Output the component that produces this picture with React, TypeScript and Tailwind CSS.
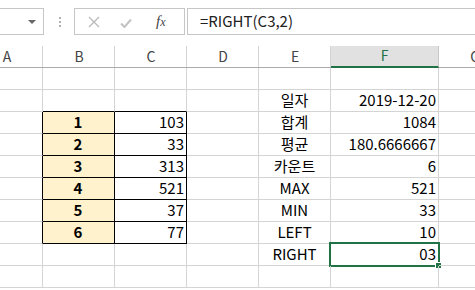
import React from 'react';

const FONT = "font-['Noto_Sans_CJK_KR','Noto_Sans',sans-serif]";

const cols = [
  { key: 'A', w: 'w-[72px]' },
  { key: 'B', w: 'w-[72px]' },
  { key: 'C', w: 'w-[72px]' },
  { key: 'D', w: 'w-[72px]' },
  { key: 'E', w: 'w-[72px]' },
  { key: 'F', w: 'w-[108px]' },
  { key: 'G', w: 'w-[72px]' },
];

const leftData: Record<number, [string, string]> = {
  3: ['1', '103'],
  4: ['2', '33'],
  5: ['3', '313'],
  6: ['4', '521'],
  7: ['5', '37'],
  8: ['6', '77'],
};

const rightData: Record<number, [string, string]> = {
  2: ['일자', '2019-12-20'],
  3: ['합계', '1084'],
  4: ['평균', '180.6666667'],
  5: ['카운트', '6'],
  6: ['MAX', '521'],
  7: ['MIN', '33'],
  8: ['LEFT', '10'],
  9: ['RIGHT', '03'],
};

function Cell({
  width,
  className = '',
  children,
}: {
  width: string;
  className?: string;
  children?: React.ReactNode;
}) {
  return (
    <div
      className={`relative flex h-[22px] shrink-0 items-center border-b border-r border-[#d4d4d4] ${width} ${className}`}
    >
      {children}
    </div>
  );
}

function Row({ r }: { r: number }) {
  const left = leftData[r];
  const right = rightData[r];
  return (
    <div className="flex">
      <Cell width="w-[72px]" className={left ? '!border-r-black' : ''} />
      {left ? (
        <>
          <Cell
            width="w-[72px]"
            className="justify-center bg-[#fff2cc] font-bold !border-r-black !border-b-black"
          >
            <span className="-ml-[1px]">{left[0]}</span>
          </Cell>
          <Cell width="w-[72px]" className="justify-end pr-[2px] !border-r-black !border-b-black">
            {left[1]}
          </Cell>
        </>
      ) : (
        <>
          <Cell width="w-[72px]" className={r === 2 ? '!border-b-black' : ''} />
          <Cell width="w-[72px]" className={r === 2 ? '!border-b-black' : ''} />
        </>
      )}
      <Cell width="w-[72px]" />
      <Cell width="w-[72px]" className="justify-center">
        {right ? right[0] : null}
      </Cell>
      <Cell width="w-[108px]" className="justify-end pr-[2px]">
        {right ? right[1] : null}
        {r === 9 ? (
          <>
            <div className="pointer-events-none absolute -left-[2px] -top-[2px] h-[25px] w-[111px] border-2 border-[#217346]" />
            <div className="absolute left-[104px] top-[18px] h-[7px] w-[7px] border border-white bg-[#217346]" />
          </>
        ) : null}
      </Cell>
      <Cell width="w-[72px]" />
    </div>
  );
}

export default function App() {
  return (
    <div className={`h-[290px] w-[475px] overflow-hidden bg-white text-[15px] text-black ${FONT}`}>
      {/* formula bar */}
      <div className="flex h-[46px] items-start pt-[8px]">
        <div className="-ml-[1px] flex h-[27px] w-[45px] items-center justify-end border border-[#c6c6c6] pr-[7px]">
          <div className="h-0 w-0 border-x-[4px] border-t-[4px] border-x-transparent border-t-[#666]" />
        </div>
        <div className="flex h-[27px] w-[30px] flex-col items-center justify-center gap-[2px] pl-[1px]">
          <div className="h-[2px] w-[2px] bg-[#b0b0b0]" />
          <div className="h-[2px] w-[2px] bg-[#b0b0b0]" />
          <div className="h-[2px] w-[2px] bg-[#b0b0b0]" />
        </div>
        <div className="flex h-[27px] w-[111px] items-center border border-[#c6c6c6]">
          <svg width="12" height="12" viewBox="0 0 12 12" className="ml-[13px]">
            <path d="M1 1 L11 11 M11 1 L1 11" stroke="#b8b8b8" strokeWidth="1.3" fill="none" />
          </svg>
          <svg width="12" height="10" viewBox="0 0 12 10" className="ml-[20px] mt-[2px]">
            <path d="M1 5.5 L4.5 9 L11 1.5" stroke="#c2c2c2" strokeWidth="2" fill="none" />
          </svg>
          <span className="ml-[24px] font-['Liberation_Serif',serif] text-[15px] italic text-[#444]">
            f<span className="text-[12px]">x</span>
          </span>
        </div>
        <div className="ml-[2px] flex h-[27px] flex-1 items-center border border-r-0 border-[#c6c6c6] pl-[12px] text-[15px] text-[#222]">
          =RIGHT(C3,2)
        </div>
      </div>

      {/* grid */}
      <div className="-ml-[29px]">
        <div className="flex">
          {cols.map((c) => (
            <div
              key={c.key}
              className={`relative flex h-[22px] shrink-0 items-center justify-center border-b border-[#ababab] text-[14px] ${c.w} ${
                c.key === 'F'
                  ? 'border-b-2 border-r border-b-[#217346] border-r-[#c8c8c8] bg-[#e1e1e1] text-[#217346]'
                  : 'text-[#444]'
              }`}
            >
              {c.key !== 'F' ? (
                <div className="absolute right-0 top-0 h-[21px] w-[1px] bg-[#d4d4d4]" />
              ) : null}
              <span className="-mt-[1px]">{c.key}</span>
            </div>
          ))}
        </div>
        {[1, 2, 3, 4, 5, 6, 7, 8, 9, 10].map((r) => (
          <Row key={r} r={r} />
        ))}
      </div>
    </div>
  );
}
